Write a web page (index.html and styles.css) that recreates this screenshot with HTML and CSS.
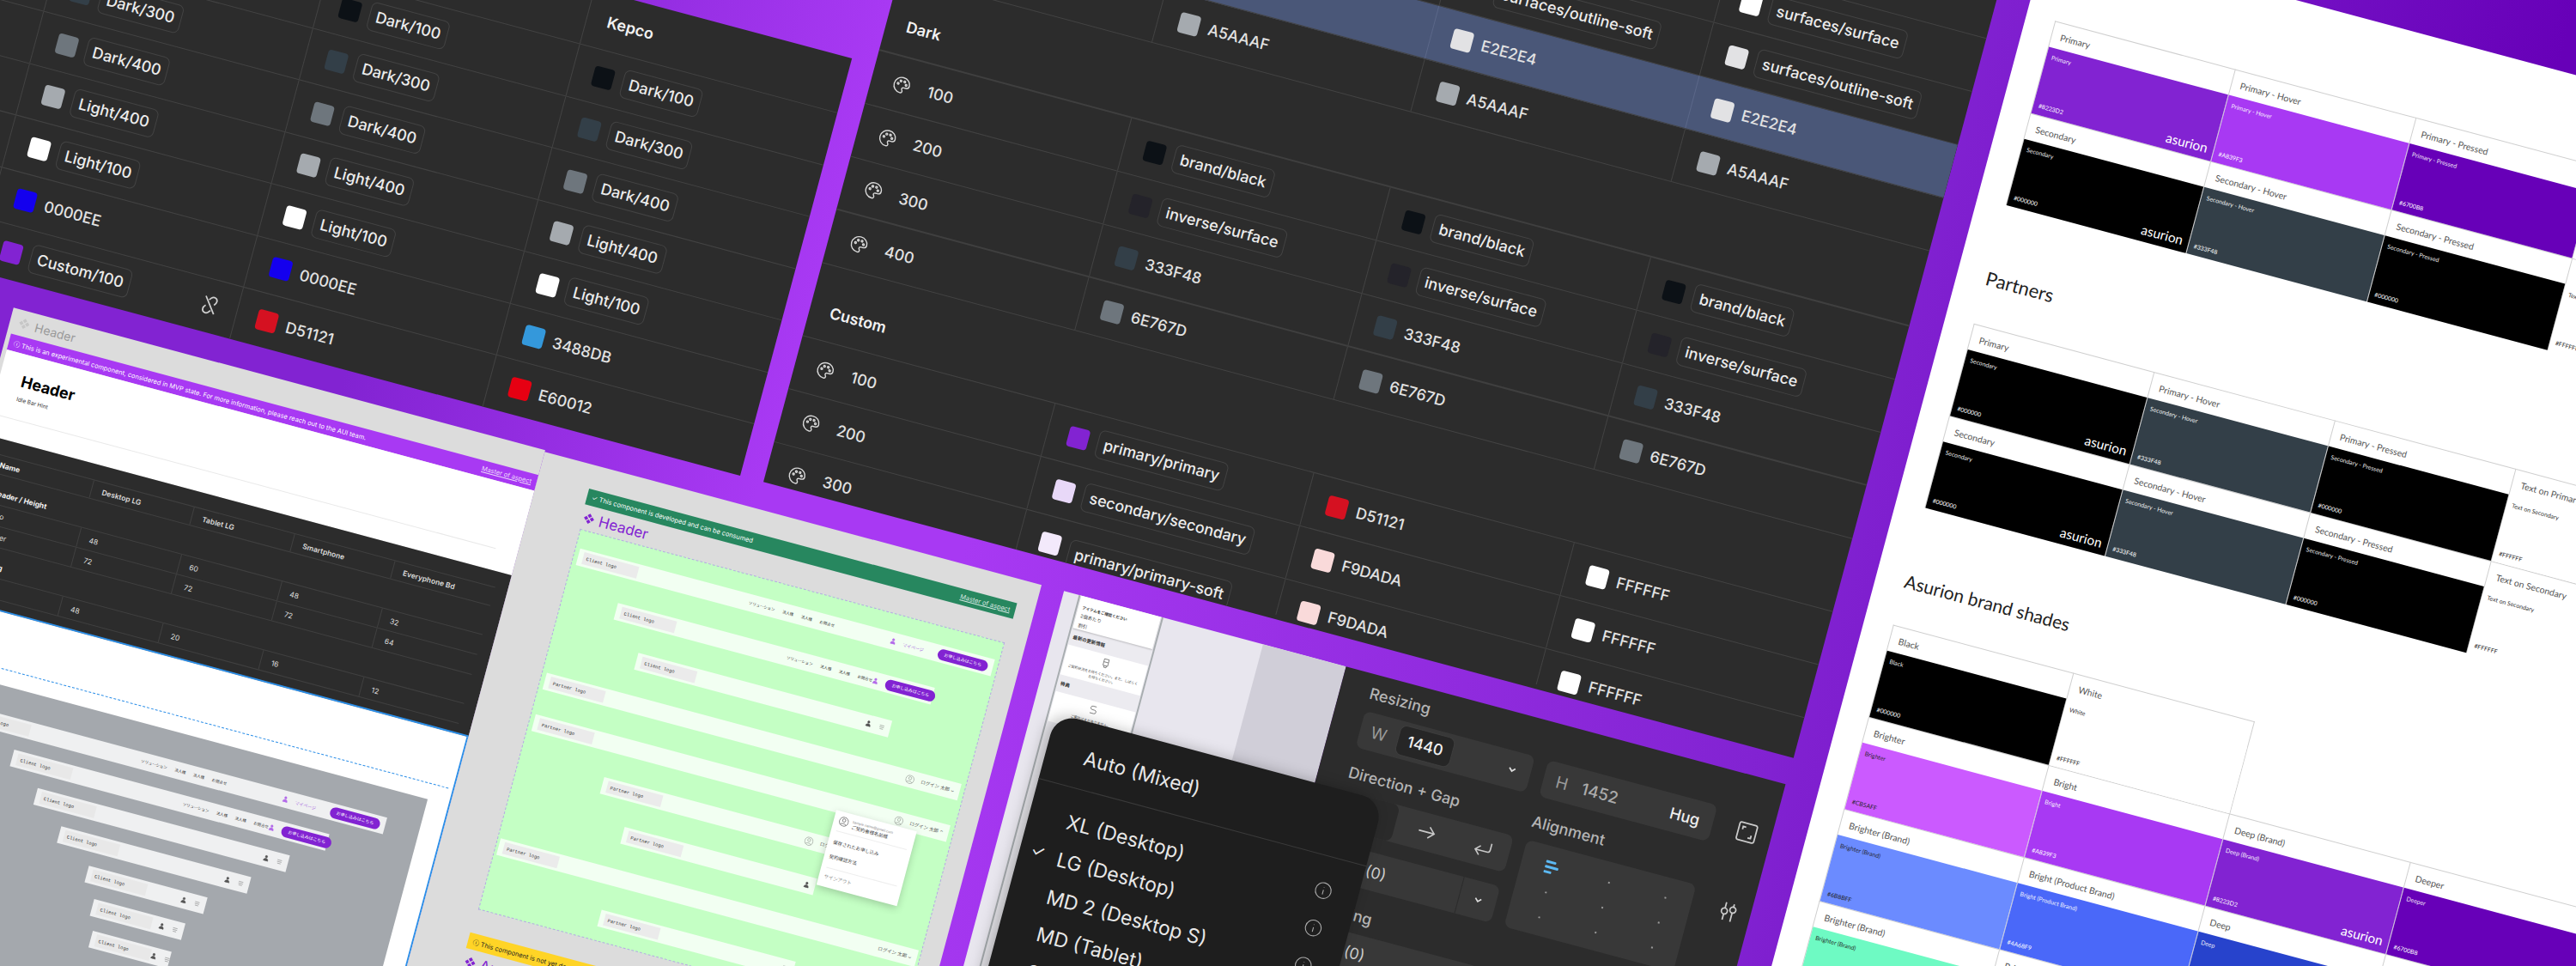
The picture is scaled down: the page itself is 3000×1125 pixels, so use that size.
FILE: index.html
```html
<!DOCTYPE html>
<html lang="en">
<head>
<meta charset="utf-8">
<title>Asurion design tokens</title>
<link rel="stylesheet" href="styles.css">
</head>
<body>
<svg class="defs" width="0" height="0" aria-hidden="true">
  <symbol id="palette" viewBox="0 0 24 24"><path d="M12 3a9 9 0 1 0 0 18c1.6 0 2.2-1 2.2-2 0-1.3-1.2-1.6-1.2-2.8 0-1 .8-1.7 2-1.7h2.5c2.300 0 3.500-1.500 3.500-3.500C21 6.500 17 3 12 3z"/><circle cx="7.500" cy="11" r="1"/><circle cx="10" cy="7.500" r="1"/><circle cx="14.500" cy="7.500" r="1"/><circle cx="17" cy="11" r="1"/></symbol>
  <symbol id="info" viewBox="0 0 24 24"><circle cx="12" cy="12" r="10"/><path d="M12 11v6M12 7.500v.5"/></symbol>
  <symbol id="chev" viewBox="0 0 12 12"><path d="M3 4.500l3 3 3-3"/></symbol>
  <symbol id="user" viewBox="0 0 12 12"><circle cx="6" cy="3.500" r="2"/><path d="M2 11c0-3 1.500-4.500 4-4.500s4 1.500 4 4.500z"/></symbol>
  <symbol id="menu" viewBox="0 0 12 12"><path d="M2 3.500h8M2 6.500h8M3 9.500h6"/></symbol>
  <symbol id="avatar" viewBox="0 0 16 16"><circle cx="8" cy="8" r="7"/><circle cx="8" cy="6" r="2.500"/><path d="M3.500 13c1-2.500 8-2.500 9 0"/></symbol>
  <symbol id="diamond" viewBox="0 0 16 16"><path d="M8 1l3 3-3 3-3-3zM4 5l3 3-3 3-3-3zM12 5l3 3-3 3-3-3zM8 9l3 3-3 3-3-3z"/></symbol>
</svg>
<main class="stage">
<div class="world">

<section class="pa">
  <div class="tr tr-head"><div class="td"></div><div class="td"></div><div class="td"></div><div class="td"><b class="th">Kepco</b></div></div>
  <div class="tr"><div class="td"></div><div class="td"><i class="sw c-dark100"></i><span class="chip">Dark/100</span></div><div class="td"><i class="sw c-dark100"></i><span class="chip">Dark/100</span></div><div class="td"><i class="sw c-dark100"></i><span class="chip">Dark/100</span></div></div>
  <div class="tr"><div class="td"></div><div class="td"><i class="sw c-dark300"></i><span class="chip">Dark/300</span></div><div class="td"><i class="sw c-dark300"></i><span class="chip">Dark/300</span></div><div class="td"><i class="sw c-dark300"></i><span class="chip">Dark/300</span></div></div>
  <div class="tr"><div class="td"></div><div class="td"><i class="sw c-dark400"></i><span class="chip">Dark/400</span></div><div class="td"><i class="sw c-dark400"></i><span class="chip">Dark/400</span></div><div class="td"><i class="sw c-dark400"></i><span class="chip">Dark/400</span></div></div>
  <div class="tr"><div class="td"></div><div class="td"><i class="sw c-light400"></i><span class="chip">Light/400</span></div><div class="td"><i class="sw c-light400"></i><span class="chip">Light/400</span></div><div class="td"><i class="sw c-light400"></i><span class="chip">Light/400</span></div></div>
  <div class="tr"><div class="td"></div><div class="td"><i class="sw c-white"></i><span class="chip">Light/100</span></div><div class="td"><i class="sw c-white"></i><span class="chip">Light/100</span></div><div class="td"><i class="sw c-white"></i><span class="chip">Light/100</span></div></div>
  <div class="tr"><div class="td"></div><div class="td"><i class="sw c-blue"></i><span class="val">0000EE</span></div><div class="td"><i class="sw c-blue"></i><span class="val">0000EE</span></div><div class="td"><i class="sw c-sky"></i><span class="val">3488DB</span></div></div>
  <div class="tr"><div class="td"></div><div class="td"><i class="sw c-purple"></i><span class="chip">Custom/100</span><svg class="unlink" viewBox="0 0 24 24"><path d="M6 4l12 16M10 7l2-2.500c2-2 6-1 6 2.500 0 1.500-1 3-2 4M14 17l-2 2.500c-2 2-6 1-6-2.500 0-1.500 1-3 2-4"/></svg></div><div class="td"><i class="sw c-red"></i><span class="val">D51121</span></div><div class="td"><i class="sw c-kred"></i><span class="val">E60012</span></div></div>
</section>

<section class="pb">
  <div class="tr"><div class="td"></div><div class="td"></div><div class="td"></div><div class="td"></div></div>
  <div class="tr"><div class="td"></div><div class="td"></div><div class="td"></div><div class="td"></div></div>
  <div class="tr"><div class="td"></div><div class="td"></div><div class="td"><i class="sw c-white"></i><span class="chip">surfaces/surface</span></div><div class="td"><i class="sw c-white"></i><span class="chip">surfaces/surface</span></div></div>
  <div class="tr"><div class="td"></div><div class="td"></div><div class="td"><i class="sw c-e2"></i><span class="chip">surfaces/outline-soft</span></div><div class="td"><i class="sw c-e2"></i><span class="chip">surfaces/outline-soft</span></div></div>
  <div class="tr tr-blue"><div class="td td-plain"></div><div class="td"><i class="sw c-e2"></i><span class="val">E2E2E4</span></div><div class="td"><i class="sw c-e2"></i><span class="val">E2E2E4</span></div><div class="td"><i class="sw c-e2"></i><span class="val">E2E2E4</span></div></div>
  <div class="tr"><div class="td"></div><div class="td"><i class="sw c-light400"></i><span class="val">A5AAAF</span></div><div class="td"><i class="sw c-light400"></i><span class="val">A5AAAF</span></div><div class="td"><i class="sw c-light400"></i><span class="val">A5AAAF</span></div></div>
  <div class="tr tr-group tr-thick"><div class="td"><b class="th">Dark</b></div></div>
  <div class="tr"><div class="td"><svg class="pal"><use href="#palette"/></svg><span class="num">100</span></div><div class="td"><i class="sw c-dark100"></i><span class="chip">brand/black</span></div><div class="td"><i class="sw c-dark100"></i><span class="chip">brand/black</span></div><div class="td"><i class="sw c-dark100"></i><span class="chip">brand/black</span></div></div>
  <div class="tr"><div class="td"><svg class="pal"><use href="#palette"/></svg><span class="num">200</span></div><div class="td"><i class="sw c-inverse"></i><span class="chip">inverse/surface</span></div><div class="td"><i class="sw c-inverse"></i><span class="chip">inverse/surface</span></div><div class="td"><i class="sw c-inverse"></i><span class="chip">inverse/surface</span></div></div>
  <div class="tr tr-thick"><div class="td"><svg class="pal"><use href="#palette"/></svg><span class="num">300</span></div><div class="td"><i class="sw c-dark300"></i><span class="val">333F48</span></div><div class="td"><i class="sw c-dark300"></i><span class="val">333F48</span></div><div class="td"><i class="sw c-dark300"></i><span class="val">333F48</span></div></div>
  <div class="tr"><div class="td"><svg class="pal"><use href="#palette"/></svg><span class="num">400</span></div><div class="td"><i class="sw c-dark400"></i><span class="val">6E767D</span></div><div class="td"><i class="sw c-dark400"></i><span class="val">6E767D</span></div><div class="td"><i class="sw c-dark400"></i><span class="val">6E767D</span></div></div>
  <div class="tr tr-group tr-custom"><div class="td"><b class="th">Custom</b></div></div>
  <div class="tr"><div class="td"><svg class="pal"><use href="#palette"/></svg><span class="num">100</span></div><div class="td"><i class="sw c-purple"></i><span class="chip">primary/primary</span></div><div class="td"><i class="sw c-red"></i><span class="val">D51121</span></div><div class="td"><i class="sw c-white"></i><span class="val">FFFFFF</span></div></div>
  <div class="tr"><div class="td"><svg class="pal"><use href="#palette"/></svg><span class="num">200</span></div><div class="td"><i class="sw c-lav"></i><span class="chip">secondary/secondary</span></div><div class="td"><i class="sw c-pink"></i><span class="val">F9DADA</span></div><div class="td"><i class="sw c-white"></i><span class="val">FFFFFF</span></div></div>
  <div class="tr tr-last"><div class="td"><svg class="pal"><use href="#palette"/></svg><span class="num">300</span></div><div class="td"><i class="sw c-lav2"></i><span class="chip">primary/primary-soft</span></div><div class="td"><i class="sw c-pink"></i><span class="val">F9DADA</span></div><div class="td"><i class="sw c-white"></i><span class="val">FFFFFF</span></div></div>
</section>

<section class="pf">
  <div class="ftitle"><svg class="fdiamond"><use href="#diamond"/></svg>Header</div>
  <div class="banner b-purple"><span>&#9432; This is an experimental component, considered in MVP state. For more information, please reach out to the AUI team.</span><u>Master of aspect</u></div>
  <div class="doc">
    <h1>Header</h1>
    <p>Idle Bar Hint</p>
    <hr>
  </div>
  <div class="spec">
    <div class="srow s-h"><b>Name</b><span>Desktop LG</span><span>Tablet LG</span><span>Smartphone</span><span>Everyphone Bd</span></div>
    <div class="srow s-sec"><b>Header / Height</b></div>
    <div class="srow"><em>Logo</em><span>48</span><span>60</span><span>48</span><span>32</span></div>
    <div class="srow"><em>Header</em><span>72</span><span>72</span><span>72</span><span>64</span></div>
    <div class="srow s-sec"><b>Padding</b></div>
    <div class="srow"><em>L/R</em><span>48</span><span>20</span><span>16</span><span>12</span></div>
  </div>
  <div class="canvas">
    <div class="dots"></div>
    <div class="gframe">
      <div class="bar g500"><span class="logo">Client logo</span><span class="nav"><i>ソリューション</i><i>法人様</i><i>法人様</i><i>お問合せ</i></span><span class="acts"><svg class="ic up"><use href="#user"/></svg><span class="my">マイページ</span><span class="cta">お申し込みはこちら</span></span></div>
      <div class="bar g380"><span class="logo">Client logo</span><span class="nav"><i>ソリューション</i><i>法人様</i><i>法人様</i><i>お問合せ</i></span><span class="acts"><svg class="ic up"><use href="#user"/></svg><span class="cta">お申し込みはこちら</span></span></div>
      <div class="bar g304"><span class="logo">Client logo</span><span class="acts"><svg class="ic"><use href="#user"/></svg><svg class="ic"><use href="#menu"/></svg></span></div>
      <div class="bar g229"><span class="logo">Client logo</span><span class="acts"><svg class="ic"><use href="#user"/></svg><svg class="ic"><use href="#menu"/></svg></span></div>
      <div class="bar g143"><span class="logo">Client logo</span><span class="acts"><svg class="ic"><use href="#user"/></svg><svg class="ic"><use href="#menu"/></svg></span></div>
      <div class="bar g110"><span class="logo">Client logo</span><span class="acts"><svg class="ic"><use href="#user"/></svg><svg class="ic"><use href="#menu"/></svg></span></div>
      <div class="bar g95"><span class="logo">Client logo</span><span class="acts"><svg class="ic"><use href="#user"/></svg><svg class="ic"><use href="#menu"/></svg></span></div>
    </div>
  </div>
</section>

<section class="pe">
  <div class="banner b-green"><span>&#10003; This component is developed and can be consumed</span><u>Master of aspect</u></div>
  <div class="etitle"><svg class="ediamond"><use href="#diamond"/></svg>Header</div>
  <div class="green">
    <div class="bar v500"><span class="logo">Client logo</span><span class="nav"><i>ソリューション</i><i>法人様</i><i>法人様</i><i>お問合せ</i></span><span class="acts"><svg class="ic up"><use href="#user"/></svg><span class="my">マイページ</span><span class="cta">お申し込みはこちら</span></span></div>
    <div class="bar v382"><span class="logo">Client logo</span><span class="nav"><i>ソリューション</i><i>法人様</i><i>法人様</i><i>お問合せ</i></span><span class="acts"><svg class="ic up"><use href="#user"/></svg><span class="cta">お申し込みはこちら</span></span></div>
    <div class="bar v306"><span class="logo">Client logo</span><span class="acts"><svg class="ic"><use href="#user"/></svg><svg class="ic"><use href="#menu"/></svg></span></div>
    <div class="bar v500"><span class="logo">Partner logo</span><span class="acts"><svg class="ic av"><use href="#avatar"/></svg><span class="who">ログイン 太郎 &#8964;</span></span></div>
    <div class="bar v500"><span class="logo">Partner logo</span><span class="acts"><svg class="ic av"><use href="#avatar"/></svg><span class="who">ログイン 太郎 &#8963;</span></span></div>
    <div class="bar v308"><span class="logo">Partner logo</span><span class="acts"><svg class="ic av"><use href="#avatar"/></svg><span class="who">ログイン 太郎 &#9662;</span></span></div>
    <div class="bar v232"><span class="logo">Partner logo</span><span class="acts"><svg class="ic"><use href="#user"/></svg></span></div>
    <div class="bar v504"><span class="logo">Partner logo</span><span class="acts"><span class="who">ログイン 太郎 &#8964;</span></span></div>
    <div class="bar v234"><span class="logo">Partner logo</span><span class="acts"><svg class="ic"><use href="#menu"/></svg></span></div>
    <div class="popup">
      <div class="pop-top"><svg class="pop-av"><use href="#avatar"/></svg><p><small>sample.name@gmail.com</small><br>ご契約者様名前様</p></div>
      <p class="pop-line">保存されたお申し込み</p>
      <p class="pop-line">契約確認方法</p>
      <p class="pop-out">サインアウト</p>
    </div>
  </div>
  <div class="banner b-yellow"><span>&#9432; This component is not yet developed</span></div>
  <div class="etitle"><svg class="ediamond"><use href="#diamond"/></svg>Announcement</div>
</section>

<section class="pd">
  <div class="gutter"></div>
  <div class="phone">
    <div class="pcard pc1"><b>アイテムをご確認ください</b><span>2個あたり</span><span>割引</span></div>
    <p class="phead">最新の更新情報</p>
    <div class="pcard pc2"><svg class="pico" viewBox="0 0 20 20"><path d="M6 3h8v11H6zM6 8h8M8 14v3h4v-3"/></svg><span>ご契約状況をお待ちください。また、しばらくお待ちください。</span></div>
    <p class="phead">特典</p>
    <div class="pcard pc2"><svg class="pico" viewBox="0 0 20 20"><path d="M14 4H8a3 3 0 0 0 0 6h4a3 3 0 0 1 0 6H5"/></svg><span>ご案内はまだありません。</span></div>
  </div>
  <div class="pmid"></div>
  <div class="pdark"></div>
</section>

<section class="pc">
  <div class="lab">Resizing</div>
  <div class="frow">
    <div class="fbox fw"><span class="fk">W</span><span class="fin">1440</span><svg class="ch"><use href="#chev"/></svg></div>
    <div class="fbox fh"><span class="fk">H</span><span class="fv">1452</span><span class="hug">Hug</span></div>
    <svg class="tool" viewBox="0 0 24 24"><rect x="3" y="3" width="18" height="18" rx="2"/><path d="M7 10V7h3M17 14v3h-3"/></svg>
  </div>
  <div class="fcols">
    <div class="fcol">
      <div class="lab lab2">Direction + Gap</div>
      <div class="fbox dir"><span class="seg"></span><svg class="da" viewBox="0 0 24 24"><path d="M3 12h17M14 6l6 6-6 6"/></svg><svg class="da" viewBox="0 0 24 24"><path d="M20 6v7c0 2-1 3-3 3H4M9 11l-5 5 5 5"/></svg></div>
      <div class="fbox gapb"><span class="gv">Auto (0)</span><span class="gch"><svg class="ch"><use href="#chev"/></svg></span></div>
      <div class="lab lab3">Padding</div>
      <div class="fbox gapb"><span class="gv">Auto (0)</span></div>
    </div>
    <div class="fcol fcol2">
      <div class="lab lab2">Alignment</div>
      <div class="agrid">
        <span class="abars"><i></i><i></i><i></i></span><i class="dot"></i><i class="dot"></i>
        <i class="dot"></i><i class="dot"></i><i class="dot"></i>
        <i class="dot"></i><i class="dot"></i><i class="dot"></i>
      </div>
    </div>
    <svg class="tool tool2" viewBox="0 0 24 24"><path d="M8 3v6M8 15v6M16 3v3M16 12v9"/><circle cx="8" cy="12" r="3"/><circle cx="16" cy="9" r="3"/></svg>
  </div>
</section>

<div class="menu">
  <div class="mtop">Auto (Mixed)</div>
  <div class="mlist">
    <div class="mi"><span>XL (Desktop)</span><svg class="mic"><use href="#info"/></svg></div>
    <div class="mi"><span class="chk">&#10003;</span><span>LG (Desktop)</span><svg class="mic"><use href="#info"/></svg></div>
    <div class="mi"><span>MD 2 (Desktop S)</span><svg class="mic"><use href="#info"/></svg></div>
    <div class="mi"><span>MD (Tablet)</span><svg class="mic"><use href="#info"/></svg></div>
    <div class="mi"><span>SM (Mobile)</span><svg class="mic"><use href="#info"/></svg></div>
  </div>
</div>

<section class="pg">
  <div class="tbl">
    <div class="cell"><p class="cl">Primary</p><div class="cc k-primary"><small>Primary</small><span class="hex">#8223D2</span><span class="logo-a">asurion</span></div></div>
    <div class="cell"><p class="cl">Primary - Hover</p><div class="cc k-bright"><small>Primary - Hover</small><span class="hex">#A839F3</span></div></div>
    <div class="cell"><p class="cl">Primary - Pressed</p><div class="cc k-deeper"><small>Primary - Pressed</small><span class="hex">#6700B8</span></div></div>
    <div class="cell"><p class="cl">Text on Primary</p><div class="cc k-white"><small>Text on Primary</small><span class="hex">#FFFFFF</span></div></div>
    <div class="cell"><p class="cl">Secondary</p><div class="cc k-black"><small>Secondary</small><span class="hex">#000000</span><span class="logo-a">asurion</span></div></div>
    <div class="cell"><p class="cl">Secondary - Hover</p><div class="cc k-slate"><small>Secondary - Hover</small><span class="hex">#333F48</span></div></div>
    <div class="cell"><p class="cl">Secondary - Pressed</p><div class="cc k-black"><small>Secondary - Pressed</small><span class="hex">#000000</span></div></div>
    <div class="cell"><p class="cl">Text on Secondary</p><div class="cc k-white"><small>Text on Secondary</small><span class="hex">#FFFFFF</span></div></div>
  </div>
  <h2 class="partners">Partners</h2>
  <div class="tbl">
    <div class="cell"><p class="cl">Primary</p><div class="cc k-black"><small>Secondary</small><span class="hex">#000000</span><span class="logo-a">asurion</span></div></div>
    <div class="cell"><p class="cl">Primary - Hover</p><div class="cc k-slate"><small>Secondary - Hover</small><span class="hex">#333F48</span></div></div>
    <div class="cell"><p class="cl">Primary - Pressed</p><div class="cc k-black"><small>Secondary - Pressed</small><span class="hex">#000000</span></div></div>
    <div class="cell"><p class="cl">Text on Primary</p><div class="cc k-white"><small>Text on Secondary</small><span class="hex">#FFFFFF</span></div></div>
    <div class="cell"><p class="cl">Secondary</p><div class="cc k-black"><small>Secondary</small><span class="hex">#000000</span><span class="logo-a">asurion</span></div></div>
    <div class="cell"><p class="cl">Secondary - Hover</p><div class="cc k-slate"><small>Secondary - Hover</small><span class="hex">#333F48</span></div></div>
    <div class="cell"><p class="cl">Secondary - Pressed</p><div class="cc k-black"><small>Secondary - Pressed</small><span class="hex">#000000</span></div></div>
    <div class="cell"><p class="cl">Text on Secondary</p><div class="cc k-white"><small>Text on Secondary</small><span class="hex">#FFFFFF</span></div></div>
  </div>
  <h2 class="shades">Asurion brand shades</h2>
  <div class="tbl">
    <div class="cell"><p class="cl">Black</p><div class="cc k-black"><small>Black</small><span class="hex">#000000</span></div></div>
    <div class="cell"><p class="cl">White</p><div class="cc k-white"><small>White</small><span class="hex">#FFFFFF</span></div></div>
    <div class="gapc"></div><div class="gapc"></div>
    <div class="cell"><p class="cl">Brighter</p><div class="cc k-brighter dk"><small>Brighter</small><span class="hex">#CB5AFF</span></div></div>
    <div class="cell"><p class="cl">Bright</p><div class="cc k-bright"><small>Bright</small><span class="hex">#A839F3</span></div></div>
    <div class="cell"><p class="cl">Deep (Brand)</p><div class="cc k-primary"><small>Deep (Brand)</small><span class="hex">#8223D2</span><span class="logo-a">asurion</span></div></div>
    <div class="cell"><p class="cl">Deeper</p><div class="cc k-deeper"><small>Deeper</small><span class="hex">#6700B8</span></div></div>
    <div class="cell"><p class="cl">Brighter (Brand)</p><div class="cc k-sky dk"><small>Brighter (Brand)</small><span class="hex">#6B8BFF</span></div></div>
    <div class="cell"><p class="cl">Bright (Product Brand)</p><div class="cc k-royal"><small>Bright (Product Brand)</small><span class="hex">#4A68F9</span></div></div>
    <div class="cell"><p class="cl">Deep</p><div class="cc k-deepb"><small>Deep</small><span class="hex">#2743CC</span></div></div>
    <div class="cell"><p class="cl">Deeper</p><div class="cc k-navy"><small>Deeper</small><span class="hex">#0F1C87</span></div></div>
    <div class="cell"><p class="cl">Brighter (Brand)</p><div class="cc k-mint dk"><small>Brighter (Brand)</small><span class="hex">#6EFAC3</span></div></div>
    <div class="cell"><p class="cl">Bright (Brand)</p><div class="cc k-teal dk"><small>Bright (Brand)</small><span class="hex">#1EF0A0</span></div></div>
  </div>
</section>

</div>
</main>
</body>
</html>
```
FILE: styles.css
```css
* { box-sizing: border-box; }
html, body { margin: 0; padding: 0; background: #8223d2; }
body { font-family: Inter, "Noto Sans CJK JP", sans-serif; }
.defs { position: absolute; }
.stage { position: relative; width: 3000px; height: 1125px; overflow: hidden; }
.world {
  position: absolute; left: 0; top: 0; width: 3400px; height: 2000px;
  transform-origin: 0 0;
  transform: rotate(15deg) translateY(-800px);
  background: linear-gradient(90deg, #8223d2 0, #8223d2 500px, #a839f3 1000px, #a839f3 1250px, #8223d2 2200px, #6700b8 2900px);
}

/* token tables */
.pa, .pb, .pc { position: absolute; background: #2c2c2c; color: #e6e6e6; overflow: hidden; }
.pa { left: 0; top: 609px; width: 976px; height: 503px; }
.pb { left: 1004px; top: 117px; width: 1242px; height: 995px; }
.tr { display: flex; height: 62.500px; border-bottom: 1px solid #434343; }
.tr-head { height: 66px; }
.pa .tr:last-child { border-bottom: 0; }
.pb .tr { height: 64px; }
.td { display: flex; align-items: center; gap: 11px; padding-left: 24px; border-left: 1px solid #434343; position: relative; flex: none; }
.pa .td:nth-child(1) { width: 52px; border-left: 0; padding: 0; }
.pa .td:nth-child(2) { width: 308px; }
.pa .td:nth-child(3) { width: 305px; }
.pa .td:nth-child(4) { width: 311px; }
.pb .td:nth-child(1) { width: 304px; border-left: 0; gap: 19px; }
.pb .td:nth-child(2) { width: 312px; }
.pb .td:nth-child(3) { width: 314px; }
.pb .td:nth-child(4) { width: 312px; }
.pb .tr-group { height: 91px; }
.pb .tr-custom { height: 88px; }
.pb .tr-last { height: 48px; border-bottom: 0; align-items: flex-start; }
.tr-group .td { align-items: flex-end; padding-bottom: 23px; }
.pb .tr-last .td { align-items: flex-start; padding-top: 19px; }
.pb .tr-thick { border-bottom: 2px solid #3f3f3f; }
.tr-blue { background: #4a5778; }
.td-plain { background: #2c2c2c; }
.tr-blue .td { border-left-color: #5b6788; }
.th { font-size: 18px; font-weight: 600; color: #f2f2f2; }
.num, .val { font-size: 18px; font-weight: 500; color: #e2e2e2; }
.chip { display: block; height: 34px; line-height: 32px; padding: 0 7px; border: 1px solid #434343; border-radius: 7px; font-size: 18px; font-weight: 500; white-space: nowrap; color: #ececec; }
.sw { display: block; width: 24px; height: 24px; border-radius: 4px; flex: none; }
.c-dark100 { background: #0c1116; }
.c-dark300 { background: #333f48; }
.c-dark400 { background: #6e767d; }
.c-light400 { background: #a5aaaf; }
.c-white { background: #fff; }
.c-blue { background: #1400ee; }
.c-sky { background: #3498db; }
.c-purple { background: #8223d2; }
.c-red { background: #d51121; }
.c-kred { background: #e60012; }
.c-e2 { background: #e2e2e4; }
.c-inverse { background: #24232a; }
.c-lav { background: #e8d8f8; }
.c-lav2 { background: #f3e9fb; }
.c-pink { background: #f9dada; }
.pal { width: 24px; height: 24px; fill: none; stroke: #d8d8d8; stroke-width: 1.400; flex: none; }
.unlink { position: absolute; right: 18px; top: 16px; width: 28px; height: 28px; fill: none; stroke: #d0d0d0; stroke-width: 1.500; }

/* header docs frames */
.pf, .pe { position: absolute; background: #dcdcdc; }
.pf { left: 108px; top: 1142px; width: 641px; height: 860px; padding-left: 5px; }
.pe { left: 749px; top: 1144px; width: 599px; height: 860px; padding: 28px 0 0 61px; }
.ftitle { display: flex; align-items: center; gap: 6px; height: 30px; padding-left: 5px; font-size: 14px; color: #9a9a9a; }
.fdiamond { width: 14px; height: 14px; fill: #c6c6c6; }
.banner { display: flex; align-items: center; justify-content: space-between; height: 19px; padding: 0 6px; font-size: 7.500px; color: #fff; white-space: nowrap; }
.banner u { font-size: 7.500px; opacity: .8; }
.b-purple { background: #a839f3; }
.b-green { background: #27875f; width: 516px; }
.b-yellow { background: #ffd426; color: #222; width: 516px; margin-top: 28px; }
.etitle { display: flex; align-items: center; gap: 5px; height: 29px; font-size: 17px; color: #8223d2; padding-left: 2px; }
.ediamond { width: 14px; height: 14px; fill: #8223d2; flex: none; }
.doc { height: 102px; background: #fff; padding: 20px 26px 0 0; }
.doc h1 { margin: 0 0 0 26px; font-size: 18px; line-height: 24px; font-weight: 700; color: #000; }
.doc p { margin: 5px 0 0 26px; font-size: 6.500px; color: #333; }
.doc hr { margin: 19px 0 0 8px; border: 0; border-top: 1px solid #e9e9e9; }
.spec { height: 195px; background: #2c2c2c; border-bottom: 2px solid #2d8fe8; padding: 18px 15px 0 17px; color: #ddd; }
.srow { display: flex; height: 24px; border-bottom: 1px solid #404040; font-size: 8.500px; }
.srow > * { display: flex; align-items: center; width: 121px; padding-left: 12px; border-left: 1px solid #404040; font-style: normal; font-weight: 400; }
.srow > *:first-child { width: 120px; padding-left: 10px; border-left: 0; }
.srow b { font-weight: 700; color: #f4f4f4; }
.s-h { height: 23px; border-top: 1px solid #404040; }
.s-h span { font-weight: 600; }
.s-sec { height: 35px; align-items: flex-end; }
.s-sec b { height: 24px; width: 100%; }
.canvas { position: relative; background: #fff; height: 640px; border-right: 2px solid #2d8fe8; padding: 63px 25px 0 29px; }
.dots { border-top: 1px dashed #2d8fe8; height: 19px; margin: 0 -20px 0 -29px; }
.gframe { display: flex; flex-direction: column; align-items: center; gap: 16px; height: 500px; background: #a4a8ad; padding-top: 33px; }
.bar { display: flex; align-items: center; flex: none; height: 20px; background: #eff0f1; padding: 0 6px; font-size: 5.500px; color: #333; }
.g500 { width: 500px; } .g380 { width: 380px; } .g304 { width: 304px; } .g229 { width: 229px; } .g143 { width: 143px; } .g110 { width: 110px; } .g95 { width: 95px; }
.logo { display: flex; align-items: center; width: 66px; height: 14px; background: #e8e8e8; padding-left: 4px; font: 5.500px "Liberation Mono", monospace; color: #333; flex: none; }
.nav { display: flex; flex: none; gap: 9px; margin-left: 134px; font-size: 4.500px; white-space: nowrap; }
.nav i { font-style: normal; }
.acts { display: flex; align-items: center; gap: 8px; margin-left: auto; flex: none; }
.ic { width: 8px; height: 8px; fill: #555; stroke: #555; stroke-width: .6; flex: none; }
.up { fill: #b46bea; stroke: #b46bea; }
.av { fill: none; width: 11px; height: 11px; stroke: #666; }
.my { color: #a86ae0; font-size: 5px; width: 34px; white-space: nowrap; }
.cta { display: block; width: 60px; height: 13px; line-height: 13px; text-align: center; background: #8223d2; border-radius: 7px; color: #fff; font-size: 5px; white-space: nowrap; overflow: hidden; }
.who { color: #555; font-size: 5.500px; white-space: nowrap; }
.green { position: relative; display: flex; flex-direction: column; align-items: center; gap: 30px; width: 512px; height: 459px; margin-left: 2px; padding-top: 21px; background: #c4ffc4; border: 1px dashed #b9a6e6; }
.green .bar { background: #f2fff2; }
.green .logo { background: #ebebeb; }
.v500 { width: 500px; } .v382 { width: 382px; } .v306 { width: 306px; } .v308 { width: 308px; } .v232 { width: 232px; } .v504 { width: 504px; } .v234 { width: 234px; }
.popup { position: absolute; left: 372px; top: 238px; width: 97px; height: 90px; background: #fff; box-shadow: 0 3px 10px rgba(0,0,0,.2); font-size: 5.500px; color: #444; padding: 5px 6px; }
.popup p { margin: 0; }
.pop-top { display: flex; gap: 4px; border-bottom: 1px solid #eee; padding-bottom: 4px; }
.pop-av { width: 12px; height: 12px; fill: none; stroke: #666; flex: none; }
.pop-top small { font-size: 4px; color: #888; }
.popup .pop-line { margin-top: 9px; }
.popup .pop-out { margin-top: 9px; padding-top: 6px; border-top: 1px solid #eee; color: #888; }

/* design tool */
.pd { position: absolute; left: 1375px; top: 1144px; width: 340px; height: 700px; background: #e8e6ee; display: flex; overflow: hidden; }
.gutter { width: 18px; }
.phone { width: 102px; background: #ecebf0; border-left: 2px solid #a8adb0; border-right: 2px solid #a8adb0; padding: 0 1px; font-size: 5.500px; color: #444; }
.pcard { background: #fff; display: flex; flex-direction: column; gap: 3px; padding: 3px 5px; }
.pc1 { height: 39px; padding-top: 10px; box-shadow: 0 1px 2px rgba(0,0,0,.2); }
.pc1 b { font-weight: 600; font-size: 4.500px; white-space: nowrap; color: #333; }
.pc2 { height: 36px; align-items: center; font-size: 4px; text-align: center; }
.pico { width: 14px; height: 14px; fill: none; stroke: #777; stroke-width: 1.200; flex: none; }
.phead { margin: 0; height: 20px; line-height: 20px; padding-left: 3px; font-size: 5.500px; font-weight: 700; color: #333; }
.pmid { width: 120px; }
.pdark { width: 100px; background: #d0ced8; }

.pc { left: 1715px; top: 1144px; width: 530px; height: 700px; padding: 12px 0 0 35px; }
.lab { font-size: 18px; line-height: 22px; font-weight: 500; color: #b4b4b4; white-space: nowrap; }
.frow { display: flex; align-items: center; margin-top: 10px; gap: 16px; }
.fbox { display: flex; align-items: center; height: 44px; width: 205px; background: #383838; border-radius: 8px; font-size: 18px; color: #aaa; position: relative; }
.fw { padding-left: 13px; }
.fk { font-size: 19px; color: #9a9a9a; width: 32px; }
.fin { display: block; width: 66px; height: 36px; line-height: 34px; text-align: center; background: #262626; border: 1px solid #3e3e3e; border-radius: 8px; color: #f0f0f0; font-weight: 500; }
.ch { width: 14px; height: 14px; fill: none; stroke: #ddd; stroke-width: 1.500; }
.fw .ch { margin-left: auto; margin-right: 15px; }
.fh { padding-left: 15px; width: 204px; }
.fh .fk { width: 31px; }
.fv { color: #aaa; font-size: 19px; font-weight: 500; }
.hug { margin-left: auto; margin-right: 16px; color: #eee; font-weight: 500; }
.tool { width: 28px; height: 28px; fill: none; stroke: #ccc; stroke-width: 1.500; margin-left: 11px; flex: none; }
.fcols { display: flex; position: relative; margin-top: 19px; gap: 16px; }
.fcol { width: 205px; display: flex; flex-direction: column; }
.fcol2 { width: 204px; }
.lab2 { margin-bottom: 11px; }
.lab3 { margin: 22px 0 9px; }
.dir { justify-content: flex-end; gap: 42px; padding-right: 18px; margin-bottom: 17px; }
.seg { position: absolute; left: 0; top: 0; width: 68px; height: 44px; background: #2a2a2a; border-radius: 8px; }
.da { width: 26px; height: 26px; fill: none; stroke: #c8c8c8; stroke-width: 1.500; }
.gapb { justify-content: space-between; }
.gv { width: 60px; margin-left: 4px; white-space: nowrap; text-align: right; color: #ccc; }
.gch { display: flex; align-items: center; justify-content: center; width: 44px; height: 44px; border-left: 1px solid #2c2c2c; }
.agrid { display: grid; grid-template-columns: repeat(3, 68px); grid-auto-rows: 30px; align-items: center; justify-items: center; width: 204px; height: 105px; padding: 9px 0 0 3px; background: #383838; border-radius: 8px; }
.abars { display: flex; flex-direction: column; gap: 3px; width: 16px; transform: translateX(-1px); }
.abars i { display: block; height: 3px; background: #5cb8f2; border-radius: 1px; }
.abars i:nth-child(1) { width: 12px; }
.abars i:nth-child(2) { width: 16px; }
.abars i:nth-child(3) { width: 9px; }
.dot { display: block; width: 2px; height: 2px; background: #999; }
.tool2 { margin: 40px 0 0 14px; }

.menu { position: absolute; left: 1403px; top: 1284px; width: 395px; height: 640px; background: #1e1e1e; border-radius: 26px; color: #e8e8e8; font-size: 23px; box-shadow: -6px 0 16px rgba(0,0,0,.25); }
.mtop { height: 79px; line-height: 84px; padding-left: 45px; border-bottom: 1px solid #3a3a3a; }
.mlist { display: flex; flex-direction: column; padding-top: 17px; }
.mi { display: flex; align-items: center; position: relative; height: 45px; padding: 0 30px 0 45px; justify-content: space-between; }
.chk { position: absolute; left: 13px; top: 8px; font-size: 19px; }
.mic { width: 22px; height: 22px; fill: none; stroke: #aaa; stroke-width: 1.200; }

/* brand doc */
.pg { position: absolute; left: 2284px; top: 108px; width: 1100px; height: 1800px; background: #fff; padding: 96px 0 0 34px; color: #333; font-family: Lato, sans-serif; }
.tbl { display: grid; grid-template-columns: repeat(4, 218px); width: 872px; }
.cell { border-top: 1px solid #cfcfcf; border-right: 1px solid #cfcfcf; }
.cell:nth-child(4n+1) { border-left: 1px solid #cfcfcf; }
.cl { margin: 0; height: 30px; line-height: 32px; padding-left: 10px; font-size: 10.500px; color: #555; white-space: nowrap; }
.cc { position: relative; display: flex; flex-direction: column; justify-content: space-between; height: 80px; padding: 7px 6px 7px 6px; color: #fff; }
.cc small { font-size: 7px; opacity: .9; }
.hex { font-size: 7px; }
.logo-a { position: absolute; right: 7px; bottom: 4px; font-size: 15.500px; font-weight: 400; line-height: 20px; }
.k-primary { background: #8223d2; }
.k-bright { background: #a839f3; }
.k-deeper { background: #6700b8; }
.k-white { background: #fff; color: #222; }
.k-black { background: #000; }
.k-slate { background: #333f48; }
.k-brighter { background: #cb5aff; }
.k-sky { background: #6b8bff; }
.k-royal { background: #4a68f9; }
.k-deepb { background: #2743cc; }
.k-navy { background: #0f1c87; }
.k-mint { background: #6efac3; }
.k-teal { background: #1ef0a0; }
.dk { color: #222; }
.partners { margin: 0; height: 143px; padding-top: 73px; font-size: 22px; line-height: 30px; font-weight: 400; color: #222; }
.shades { margin: 0; height: 141px; padding-top: 73px; font-size: 21px; line-height: 30px; font-weight: 400; color: #222; }
```
